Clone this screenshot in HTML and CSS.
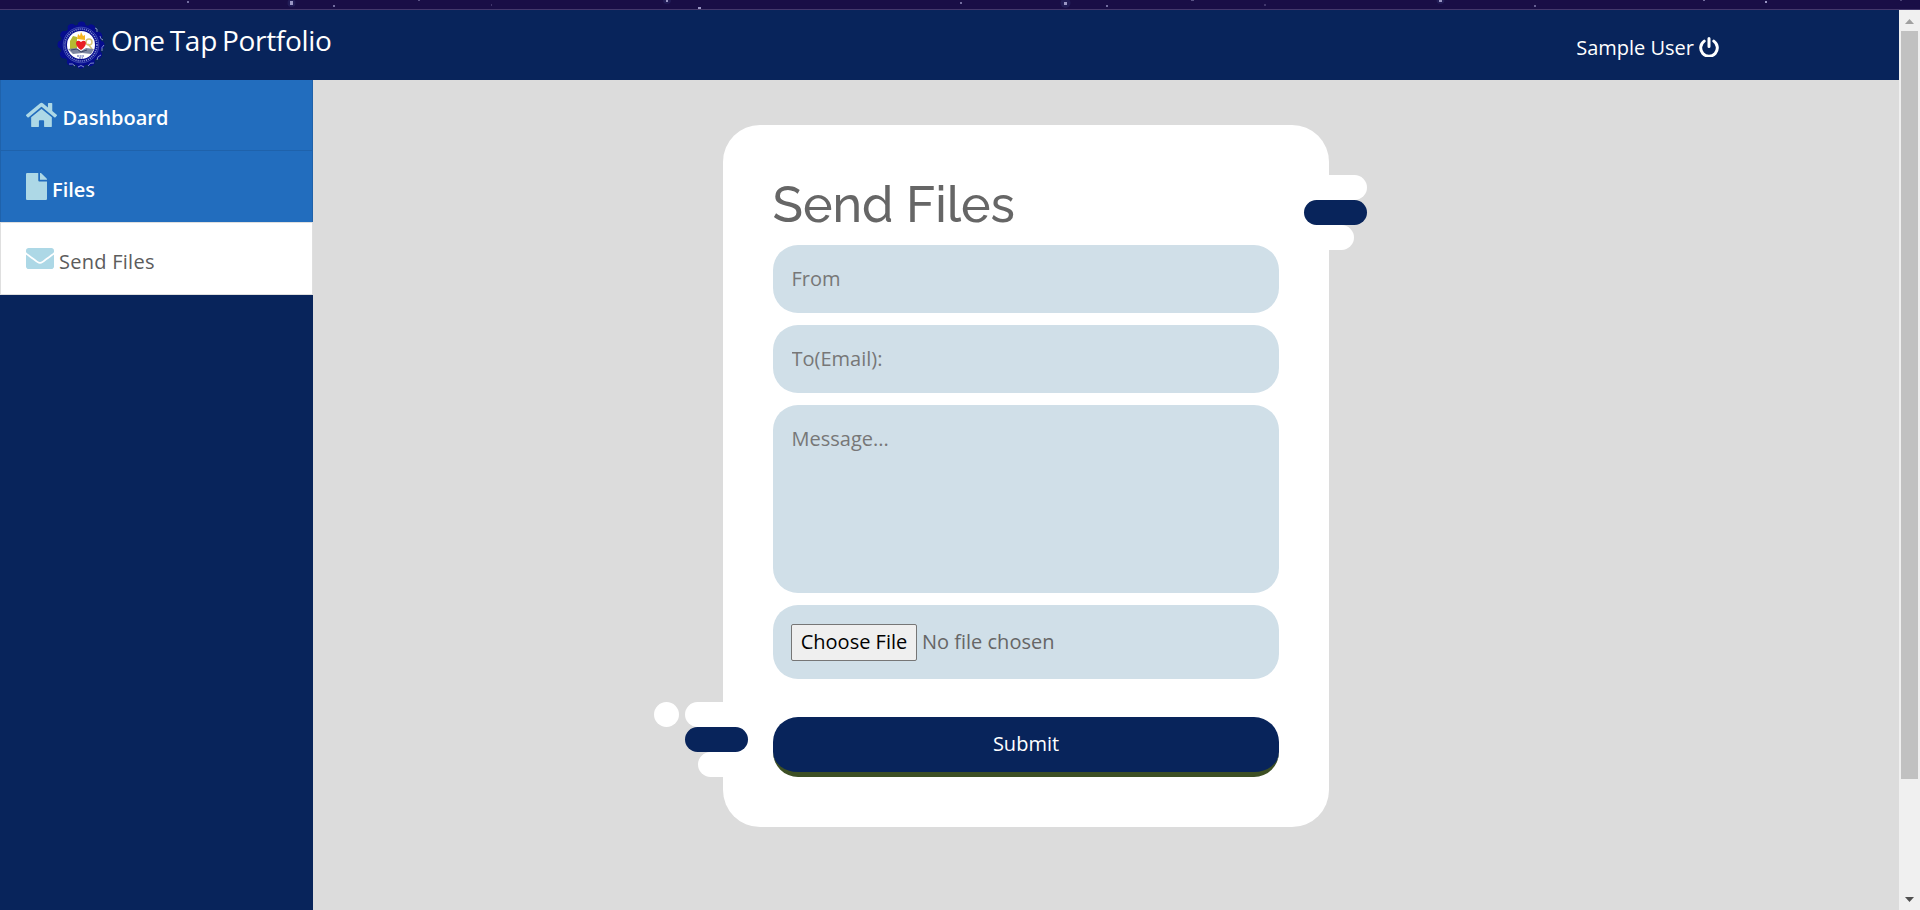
FILE: index.html
```html
<!DOCTYPE html>
<html lang="en">
<head>
<meta charset="utf-8">
<title>One Tap Portfolio</title>
<link rel="stylesheet" href="styles.css">
</head>
<body>
<svg class="sky" viewBox="0 0 1920 10">
  <rect width="1920" height="10" fill="#190e46"/>
  <rect y="9" width="1920" height="1" fill="#43386b"/>
  <g fill="#2b2b68" opacity=".5"><circle cx="291.500" cy="3" r="4"/><circle cx="1065.500" cy="3" r="5"/><circle cx="667" cy="0" r="4"/><circle cx="1440.500" cy="0" r="4"/></g>
  <g fill="#9a96c4">
    <rect x="187" y="1" width="2" height="2" opacity=".7"/><rect x="290" y="1" width="3" height="4"/><rect x="333" y="5" width="2" height="2" opacity=".7"/>
    <rect x="418" y="0" width="2" height="1" opacity=".5"/><rect x="491" y="4" width="1" height="2" opacity=".3"/><rect x="666" y="0" width="2" height="2"/>
    <rect x="698" y="7" width="3" height="2"/><rect x="960" y="2" width="2" height="2" opacity=".7"/><rect x="1064" y="2" width="3" height="3"/>
    <rect x="1106" y="5" width="2" height="2" opacity=".7"/><rect x="1191" y="0" width="3" height="1" opacity=".5"/>
    <rect x="1264" y="4" width="2" height="2" opacity=".3"/><rect x="1439" y="0" width="3" height="2"/><rect x="1534" y="5" width="2" height="2" opacity=".6"/>
    <rect x="1703" y="0" width="2" height="1" opacity=".7"/><rect x="1765" y="1" width="2" height="2"/><rect x="1900" y="0" width="2" height="1" opacity=".4"/>
  </g>
</svg>
<div class="window">
  <div class="page">
    <header class="topbar">
      <div class="brand">
        <svg class="seal" viewBox="0 0 48 48">
          <circle cx="24" cy="24" r="20.500" fill="#060c8e"/>
          <circle cx="24" cy="24" r="19.500" fill="none" stroke="#060c8e" stroke-width="8" stroke-linecap="round" stroke-dasharray=".01 10.200"/>
          <path d="M38 7l2 1v3M43 15q0 3 3 4M47 24q-3 2-2 6M44 34q-4 1-4 5M37 42q-4-1-6 3M27 46q-3-3-6 0M18 45q-2-3-6-2" fill="none" stroke="#8d9bd0" stroke-width=".9"/>
          <circle cx="24" cy="24" r="17.800" fill="none" stroke="#5563bd" stroke-width=".7"/>
          <circle cx="24" cy="24" r="16" fill="none" stroke="#7c88cd" stroke-width="1.700" stroke-dasharray="1.200 .9"/>
          <circle cx="24" cy="24" r="14" fill="#fff"/>
          <path d="M13 20l3-5 4 1v11l-7 2z" fill="#b5b932"/>
          <circle cx="32" cy="21" r="3" fill="none" stroke="#d8c477" stroke-width="1.500"/>
          <path d="M31 23l4 5" stroke="#d8c477" stroke-width="1.500"/>
          <path d="M11 28l8-1 5 3 5-3 8 1-3 5-9-1-9 1z" fill="#7d86a0"/>
          <path d="M14 29l6-1 4 3 6-2" fill="none" stroke="#3b4567"/>
          <path d="M20 18l1-5 2 2 1-4 2 4 2-1v5z" fill="#f7b51e"/>
          <path d="M24 29c-8-5-5-12 0-8 5-4 8 3 0 8z" fill="#e81e25"/>
          <path d="M20 35h7M22 37h4" stroke="#4450a6" stroke-width="1.200" stroke-dasharray="2 .6"/>
        </svg>
        <span class="brand-name">One Tap Portfolio</span>
      </div>
      <div class="account">
        <span>Sample User</span>
        <svg class="power" viewBox="0 0 20 20" fill="none" stroke="#fff" stroke-width="3" stroke-linecap="round"><path d="M5.200 4.100a8.300 8.300 0 1 0 9.600 0M10 1.500V9.500"/></svg>
      </div>
    </header>
    <div class="body">
      <nav class="sidebar">
        <a class="item">
          <svg class="icon home" viewBox="0 0 576 512"><path d="M280.400 148.300 96 300.100V464a16 16 0 0 0 16 16h112a16 16 0 0 0 16-16v-96a16 16 0 0 1 16-16h64a16 16 0 0 1 16 16v96a16 16 0 0 0 16 16h112a16 16 0 0 0 16-16V300L295.700 148.300a12.200 12.200 0 0 0-15.300 0zM571.600 251.500 488 182.600V44a12 12 0 0 0-12-12h-56a12 12 0 0 0-12 12v72.600L318.500 43a48 48 0 0 0-61 0L4.300 251.500a12 12 0 0 0-1.600 16.900l25.500 31a12 12 0 0 0 16.900 1.600L280.400 107.200a12.200 12.200 0 0 1 15.300 0L530.900 301a12 12 0 0 0 16.900-1.600l25.500-31a12 12 0 0 0-1.700-16.900z"/></svg>
          <span>Dashboard</span>
        </a>
        <a class="item files">
          <svg class="icon file" viewBox="0 0 384 512" preserveAspectRatio="none"><path d="M224 136V0H24C10.700 0 0 10.700 0 24v464c0 13.300 10.700 24 24 24h336c13.300 0 24-10.700 24-24V160H248c-13.200 0-24-10.800-24-24zm160-14.100v6.100H256V0h6.100c6.400 0 12.500 2.500 17 7l97.900 98c4.500 4.500 7 10.600 7 16.900z"/></svg>
          <span>Files</span>
        </a>
        <a class="item current">
          <svg class="icon mail" viewBox="0 64 512 384"><path d="M502.300 190.800c3.900-3.100 9.700-.2 9.700 4.700V400c0 26.500-21.500 48-48 48H48c-26.500 0-48-21.500-48-48V195.600c0-5 5.700-7.800 9.700-4.700 22.400 17.400 52.100 39.500 154.100 113.600 21.100 15.400 56.700 47.800 92.200 47.600 35.700.3 72-32.800 92.300-47.600 102-74.100 131.600-96.300 154-113.700zM256 320c23.200.4 56.600-29.200 73.400-41.400 132.700-96.300 142.800-104.700 173.400-128.700 5.800-4.500 9.200-11.500 9.200-18.900v-19c0-26.500-21.500-48-48-48H48c-26.500 0-48 21.500-48 48v19c0 7.400 3.400 14.300 9.200 18.900 30.600 23.900 40.700 32.400 173.400 128.700 16.800 12.200 50.200 41.800 73.400 41.400z"/></svg>
          <span>Send Files</span>
        </a>
      </nav>
      <main class="content">
        <form class="card">
          <div class="deco deco-right"><i></i><i class="navy"></i><i class="short"></i></div>
          <div class="deco deco-left"><i class="dotted"></i><i class="navy"></i><i class="short"></i></div>
          <h1 class="title">Send Files</h1>
          <input class="field" type="text" placeholder="From">
          <input class="field" type="text" placeholder="To(Email):">
          <textarea class="field message" placeholder="Message..."></textarea>
          <div class="field upload"><button class="choose" type="button">Choose File</button><span>No file chosen</span></div>
          <button class="submit" type="button">Submit</button>
        </form>
      </main>
    </div>
  </div>
  <div class="scrollbar">
    <svg class="arrow" viewBox="0 0 21 21"><path d="M6 14h9l-4.500-5z" fill="#a0a0a0"/></svg>
    <div class="thumb"></div>
    <svg class="arrow down" viewBox="0 0 21 21"><path d="M6 8h9l-4.500 5z" fill="#505050"/></svg>
  </div>
</div>
</body>
</html>
```
FILE: styles.css
```css
* { box-sizing: border-box; }
body { margin: 0; height: 910px; overflow: hidden; font: 20px/30px "Open Sans", sans-serif; display: flex; flex-direction: column; }
.sky { display: block; width: 1920px; height: 10px; flex: none; }
.window { display: flex; height: 900px; }
.page { width: 1899px; display: flex; flex-direction: column; }
.topbar { height: 70px; flex: none; background: #08245b; color: #fff; display: flex; justify-content: space-between; padding: 0 180px 0 57px; }
.brand { display: flex; }
.seal { width: 48px; height: 48px; margin-top: 11px; }
.brand-name { margin: 10px 0 0 6px; font-size: 28px; line-height: 40px; letter-spacing: -.3px; word-spacing: -2px; white-space: nowrap; }
.account { display: flex; gap: 5px; margin-top: 23px; }
.power { width: 20px; height: 20px; margin-top: 4px; }
.body { flex: 1; display: flex; }
.sidebar { width: 313px; background: #08245b; }
.item { height: 71px; display: flex; align-items: flex-start; background: #226dbe; border: 1px solid #1f62ab; border-top: 0; color: #fff; font-weight: 600; padding-left: 25px; }
.item + .item { border-bottom: 0; }
.item .icon { fill: #add8e6; flex: none; }
.item span { margin-top: 23px; }
.item.files span { margin-top: 24px; }
.home { width: 31px; height: 28px; margin: 21px 6px 0 0; }
.file { width: 21px; height: 27px; margin: 22px 5px 0 0; }
.mail { width: 28px; height: 21px; margin: 25px 5px 0 0; }
.home + span { margin-left: -.6px; }
.item + .item.current { height: 73px; background: #fff; border: 1px solid #dfdfdf; color: #5c5c5c; font-weight: 500; letter-spacing: .26px; }
.item.current span { margin-top: 24px; }
.content { flex: 1; background: #dcdcdc; padding: 45px 0 0 410px; }
.card { position: relative; width: 606px; height: 702px; background: #fff; border-radius: 37px; padding: 50px; display: flex; flex-direction: column; }
.title { margin: 0 0 10px -.5px; height: 60px; font: 500 50px/60px Raleway, Lato, sans-serif; color: #666; white-space: nowrap; }
.field { display: block; width: 506px; height: 68px; margin: 0 0 12px; padding: 18px 18.5px 20px; border: 0; border-radius: 25px; background: #d0dfe8; color: #666; font: 20px/30px "Open Sans", sans-serif; resize: none; }
.field::placeholder { color: #777; opacity: 1; }
.message { height: 188px; padding-top: 19px; }
.upload { height: 74px; display: flex; gap: 5px; align-items: center; margin-bottom: 38px; padding: 0 18px; }
.choose { width: 126px; height: 37px; padding: 0; border: 1px solid #767676; border-radius: 2px; background: #efefef; color: #000; font: 20px/30px "Open Sans", sans-serif; white-space: nowrap; }
.submit { height: 60px; padding: 0 0 2px; border: 0; border-bottom: 5px solid #3d4f24; border-radius: 25px; background: #08245b; color: #fff; font: 20px/30px "Open Sans", sans-serif; }
.deco { position: absolute; width: 63px; }
.deco i { display: block; width: 63px; height: 25px; border-radius: 13px; background: #fff; }
.deco .navy { background: #08245b; }
.deco-right { top: 50px; right: -38px; }
.deco-right .short { margin-left: -13px; }
.deco-left { left: -38px; top: 577px; }
.deco-left .short { margin-left: 13px; }
.deco .dotted::before { content: ""; display: block; width: 25px; height: 25px; margin-left: -31px; border-radius: 50%; background: #fff; }
.scrollbar { width: 21px; background: #f0f0f0; display: flex; flex-direction: column; }
.arrow { width: 21px; height: 21px; flex: none; }
.thumb { width: 17px; height: 748px; margin-left: 2px; background: #c1c1c1; }
.down { margin-top: auto; }
```
